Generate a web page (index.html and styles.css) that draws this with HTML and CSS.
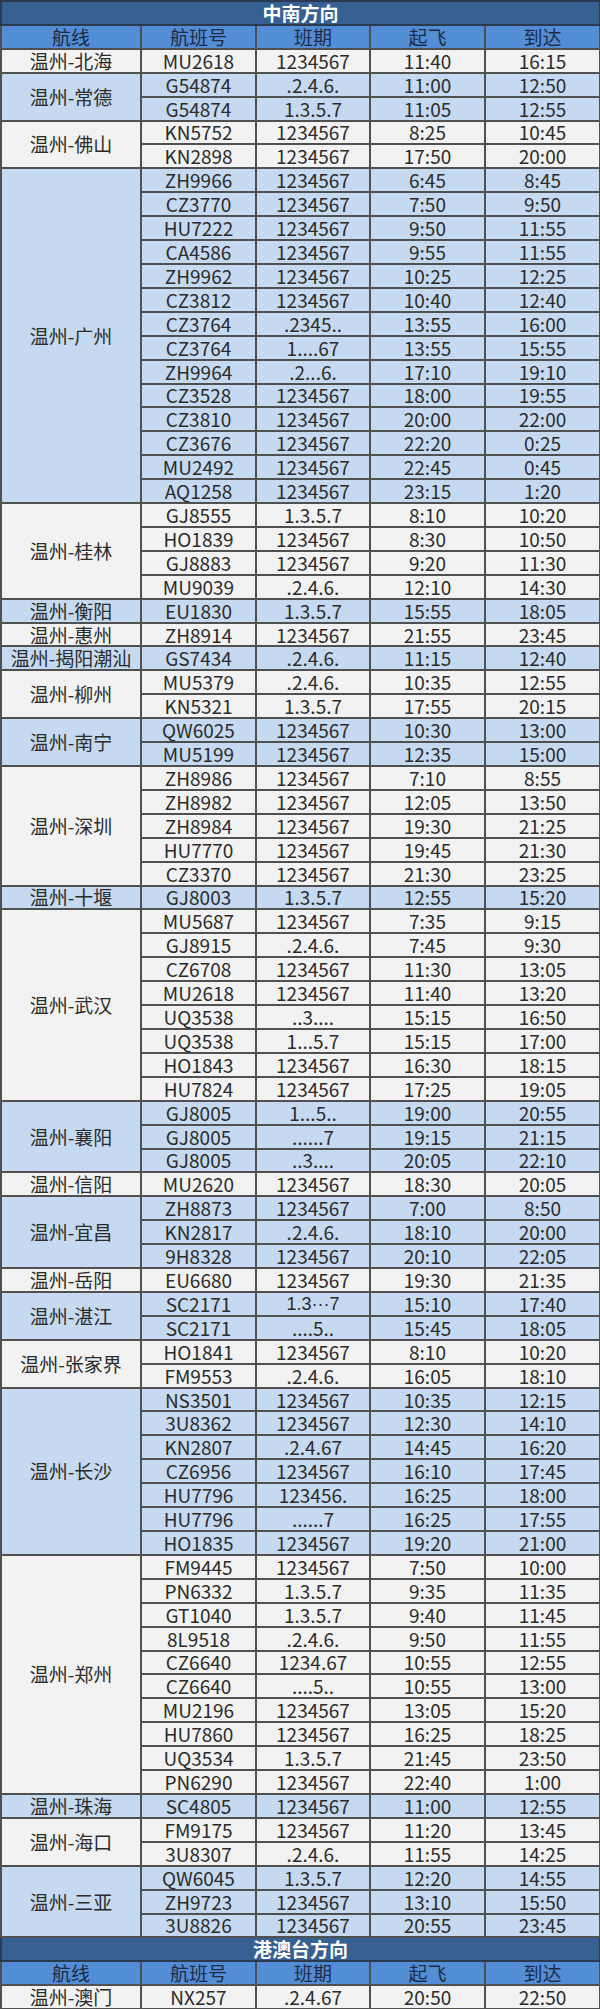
FILE: index.html
```html
<!DOCTYPE html>
<html lang="zh-CN">
<head>
<meta charset="utf-8">
<title>航班时刻表</title>
<link rel="stylesheet" href="styles.css">
</head>
<body>
<table class="sched">
<colgroup><col class="c1"><col class="c2"><col class="c3"><col class="c4"><col class="c5"></colgroup>
<tbody>
<tr class="title"><td colspan="5">中南方向</td></tr>
<tr class="head"><td>航线</td><td>航班号</td><td>班期</td><td>起飞</td><td>到达</td></tr>

<tr class="g"><td class="r">温州-北海</td><td>MU2618</td><td>1234567</td><td>11:40</td><td>16:15</td></tr>

<tr class="b"><td class="r" rowspan="2">温州-常德</td><td>G54874</td><td>.2.4.6.</td><td>11:00</td><td>12:50</td></tr>
<tr class="b"><td>G54874</td><td>1.3.5.7</td><td>11:05</td><td>12:55</td></tr>

<tr class="g"><td class="r" rowspan="2">温州-佛山</td><td>KN5752</td><td>1234567</td><td>8:25</td><td>10:45</td></tr>
<tr class="g"><td>KN2898</td><td>1234567</td><td>17:50</td><td>20:00</td></tr>

<tr class="b"><td class="r" rowspan="14">温州-广州</td><td>ZH9966</td><td>1234567</td><td>6:45</td><td>8:45</td></tr>
<tr class="b"><td>CZ3770</td><td>1234567</td><td>7:50</td><td>9:50</td></tr>
<tr class="b"><td>HU7222</td><td>1234567</td><td>9:50</td><td>11:55</td></tr>
<tr class="b"><td>CA4586</td><td>1234567</td><td>9:55</td><td>11:55</td></tr>
<tr class="b"><td>ZH9962</td><td>1234567</td><td>10:25</td><td>12:25</td></tr>
<tr class="b"><td>CZ3812</td><td>1234567</td><td>10:40</td><td>12:40</td></tr>
<tr class="b"><td>CZ3764</td><td>.2345..</td><td>13:55</td><td>16:00</td></tr>
<tr class="b"><td>CZ3764</td><td>1....67</td><td>13:55</td><td>15:55</td></tr>
<tr class="b"><td>ZH9964</td><td>.2...6.</td><td>17:10</td><td>19:10</td></tr>
<tr class="b"><td>CZ3528</td><td>1234567</td><td>18:00</td><td>19:55</td></tr>
<tr class="b"><td>CZ3810</td><td>1234567</td><td>20:00</td><td>22:00</td></tr>
<tr class="b"><td>CZ3676</td><td>1234567</td><td>22:20</td><td>0:25</td></tr>
<tr class="b"><td>MU2492</td><td>1234567</td><td>22:45</td><td>0:45</td></tr>
<tr class="b"><td>AQ1258</td><td>1234567</td><td>23:15</td><td>1:20</td></tr>

<tr class="g"><td class="r" rowspan="4">温州-桂林</td><td>GJ8555</td><td>1.3.5.7</td><td>8:10</td><td>10:20</td></tr>
<tr class="g"><td>HO1839</td><td>1234567</td><td>8:30</td><td>10:50</td></tr>
<tr class="g"><td>GJ8883</td><td>1234567</td><td>9:20</td><td>11:30</td></tr>
<tr class="g"><td>MU9039</td><td>.2.4.6.</td><td>12:10</td><td>14:30</td></tr>

<tr class="b"><td class="r">温州-衡阳</td><td>EU1830</td><td>1.3.5.7</td><td>15:55</td><td>18:05</td></tr>

<tr class="g"><td class="r">温州-惠州</td><td>ZH8914</td><td>1234567</td><td>21:55</td><td>23:45</td></tr>

<tr class="b"><td class="r">温州-揭阳潮汕</td><td>GS7434</td><td>.2.4.6.</td><td>11:15</td><td>12:40</td></tr>

<tr class="g"><td class="r" rowspan="2">温州-柳州</td><td>MU5379</td><td>.2.4.6.</td><td>10:35</td><td>12:55</td></tr>
<tr class="g"><td>KN5321</td><td>1.3.5.7</td><td>17:55</td><td>20:15</td></tr>

<tr class="b"><td class="r" rowspan="2">温州-南宁</td><td>QW6025</td><td>1234567</td><td>10:30</td><td>13:00</td></tr>
<tr class="b"><td>MU5199</td><td>1234567</td><td>12:35</td><td>15:00</td></tr>

<tr class="g"><td class="r" rowspan="5">温州-深圳</td><td>ZH8986</td><td>1234567</td><td>7:10</td><td>8:55</td></tr>
<tr class="g"><td>ZH8982</td><td>1234567</td><td>12:05</td><td>13:50</td></tr>
<tr class="g"><td>ZH8984</td><td>1234567</td><td>19:30</td><td>21:25</td></tr>
<tr class="g"><td>HU7770</td><td>1234567</td><td>19:45</td><td>21:30</td></tr>
<tr class="g"><td>CZ3370</td><td>1234567</td><td>21:30</td><td>23:25</td></tr>

<tr class="b"><td class="r">温州-十堰</td><td>GJ8003</td><td>1.3.5.7</td><td>12:55</td><td>15:20</td></tr>

<tr class="g"><td class="r" rowspan="8">温州-武汉</td><td>MU5687</td><td>1234567</td><td>7:35</td><td>9:15</td></tr>
<tr class="g"><td>GJ8915</td><td>.2.4.6.</td><td>7:45</td><td>9:30</td></tr>
<tr class="g"><td>CZ6708</td><td>1234567</td><td>11:30</td><td>13:05</td></tr>
<tr class="g"><td>MU2618</td><td>1234567</td><td>11:40</td><td>13:20</td></tr>
<tr class="g"><td>UQ3538</td><td>..3....</td><td>15:15</td><td>16:50</td></tr>
<tr class="g"><td>UQ3538</td><td>1...5.7</td><td>15:15</td><td>17:00</td></tr>
<tr class="g"><td>HO1843</td><td>1234567</td><td>16:30</td><td>18:15</td></tr>
<tr class="g"><td>HU7824</td><td>1234567</td><td>17:25</td><td>19:05</td></tr>

<tr class="b"><td class="r" rowspan="3">温州-襄阳</td><td>GJ8005</td><td>1...5..</td><td>19:00</td><td>20:55</td></tr>
<tr class="b"><td>GJ8005</td><td>......7</td><td>19:15</td><td>21:15</td></tr>
<tr class="b"><td>GJ8005</td><td>..3....</td><td>20:05</td><td>22:10</td></tr>

<tr class="g"><td class="r">温州-信阳</td><td>MU2620</td><td>1234567</td><td>18:30</td><td>20:05</td></tr>

<tr class="b"><td class="r" rowspan="3">温州-宜昌</td><td>ZH8873</td><td>1234567</td><td>7:00</td><td>8:50</td></tr>
<tr class="b"><td>KN2817</td><td>.2.4.6.</td><td>18:10</td><td>20:00</td></tr>
<tr class="b"><td>9H8328</td><td>1234567</td><td>20:10</td><td>22:05</td></tr>

<tr class="g"><td class="r">温州-岳阳</td><td>EU6680</td><td>1234567</td><td>19:30</td><td>21:35</td></tr>

<tr class="b"><td class="r" rowspan="2">温州-湛江</td><td>SC2171</td><td class="lat">1.3···7</td><td>15:10</td><td>17:40</td></tr>
<tr class="b"><td>SC2171</td><td>....5..</td><td>15:45</td><td>18:05</td></tr>

<tr class="g"><td class="r" rowspan="2">温州-张家界</td><td>HO1841</td><td>1234567</td><td>8:10</td><td>10:20</td></tr>
<tr class="g"><td>FM9553</td><td>.2.4.6.</td><td>16:05</td><td>18:10</td></tr>

<tr class="b"><td class="r" rowspan="7">温州-长沙</td><td>NS3501</td><td>1234567</td><td>10:35</td><td>12:15</td></tr>
<tr class="b"><td>3U8362</td><td>1234567</td><td>12:30</td><td>14:10</td></tr>
<tr class="b"><td>KN2807</td><td>.2.4.67</td><td>14:45</td><td>16:20</td></tr>
<tr class="b"><td>CZ6956</td><td>1234567</td><td>16:10</td><td>17:45</td></tr>
<tr class="b"><td>HU7796</td><td>123456.</td><td>16:25</td><td>18:00</td></tr>
<tr class="b"><td>HU7796</td><td>......7</td><td>16:25</td><td>17:55</td></tr>
<tr class="b"><td>HO1835</td><td>1234567</td><td>19:20</td><td>21:00</td></tr>

<tr class="g"><td class="r" rowspan="10">温州-郑州</td><td>FM9445</td><td>1234567</td><td>7:50</td><td>10:00</td></tr>
<tr class="g"><td>PN6332</td><td>1.3.5.7</td><td>9:35</td><td>11:35</td></tr>
<tr class="g"><td>GT1040</td><td>1.3.5.7</td><td>9:40</td><td>11:45</td></tr>
<tr class="g"><td>8L9518</td><td>.2.4.6.</td><td>9:50</td><td>11:55</td></tr>
<tr class="g"><td>CZ6640</td><td>1234.67</td><td>10:55</td><td>12:55</td></tr>
<tr class="g"><td>CZ6640</td><td>....5..</td><td>10:55</td><td>13:00</td></tr>
<tr class="g"><td>MU2196</td><td>1234567</td><td>13:05</td><td>15:20</td></tr>
<tr class="g"><td>HU7860</td><td>1234567</td><td>16:25</td><td>18:25</td></tr>
<tr class="g"><td>UQ3534</td><td>1.3.5.7</td><td>21:45</td><td>23:50</td></tr>
<tr class="g"><td>PN6290</td><td>1234567</td><td>22:40</td><td>1:00</td></tr>

<tr class="b"><td class="r">温州-珠海</td><td>SC4805</td><td>1234567</td><td>11:00</td><td>12:55</td></tr>

<tr class="g"><td class="r" rowspan="2">温州-海口</td><td>FM9175</td><td>1234567</td><td>11:20</td><td>13:45</td></tr>
<tr class="g"><td>3U8307</td><td>.2.4.6.</td><td>11:55</td><td>14:25</td></tr>

<tr class="b"><td class="r" rowspan="3">温州-三亚</td><td>QW6045</td><td>1.3.5.7</td><td>12:20</td><td>14:55</td></tr>
<tr class="b"><td>ZH9723</td><td>1234567</td><td>13:10</td><td>15:50</td></tr>
<tr class="b"><td>3U8826</td><td>1234567</td><td>20:55</td><td>23:45</td></tr>

<tr class="title"><td colspan="5">港澳台方向</td></tr>
<tr class="head"><td>航线</td><td>航班号</td><td>班期</td><td>起飞</td><td>到达</td></tr>
<tr class="g"><td class="r">温州-澳门</td><td>NX257</td><td>.2.4.67</td><td>20:50</td><td>22:50</td></tr>
</tbody>
</table>
</body>
</html>
```

FILE: styles.css
```css
html, body {
  margin: 0;
  padding: 0;
  background: #ffffff;
}

.sched {
  width: 599px;
  border-collapse: collapse;
  table-layout: fixed;
  font-family: "Noto Sans CJK SC", "Liberation Sans", sans-serif;
  font-size: 19px;
  color: #2b2b2b;
}

.c1 { width: 140px; }
.c2 { width: 115px; }
.c3 { width: 114px; }
.c4 { width: 115px; }
.c5 { width: 115px; }

.sched tr {
  height: 23.92px;
}

.sched td {
  border: 2px solid #505050;
  padding: 0;
  text-align: center;
  vertical-align: middle;
  line-height: 20px;
  white-space: nowrap;
}

.sched td.lat {
  font-family: "Liberation Sans", sans-serif;
  font-size: 18px;
}

.sched tr.title td {
  background: #366092;
  color: #ffffff;
  font-weight: bold;
  border-color: #2a3a50;
}

.sched tr.head td {
  background: #538dd5;
  color: #1b2b45;
}

.sched tr.g td {
  background: #f2f2f2;
}

.sched tr.b td {
  background: #c5d9f1;
}
```
